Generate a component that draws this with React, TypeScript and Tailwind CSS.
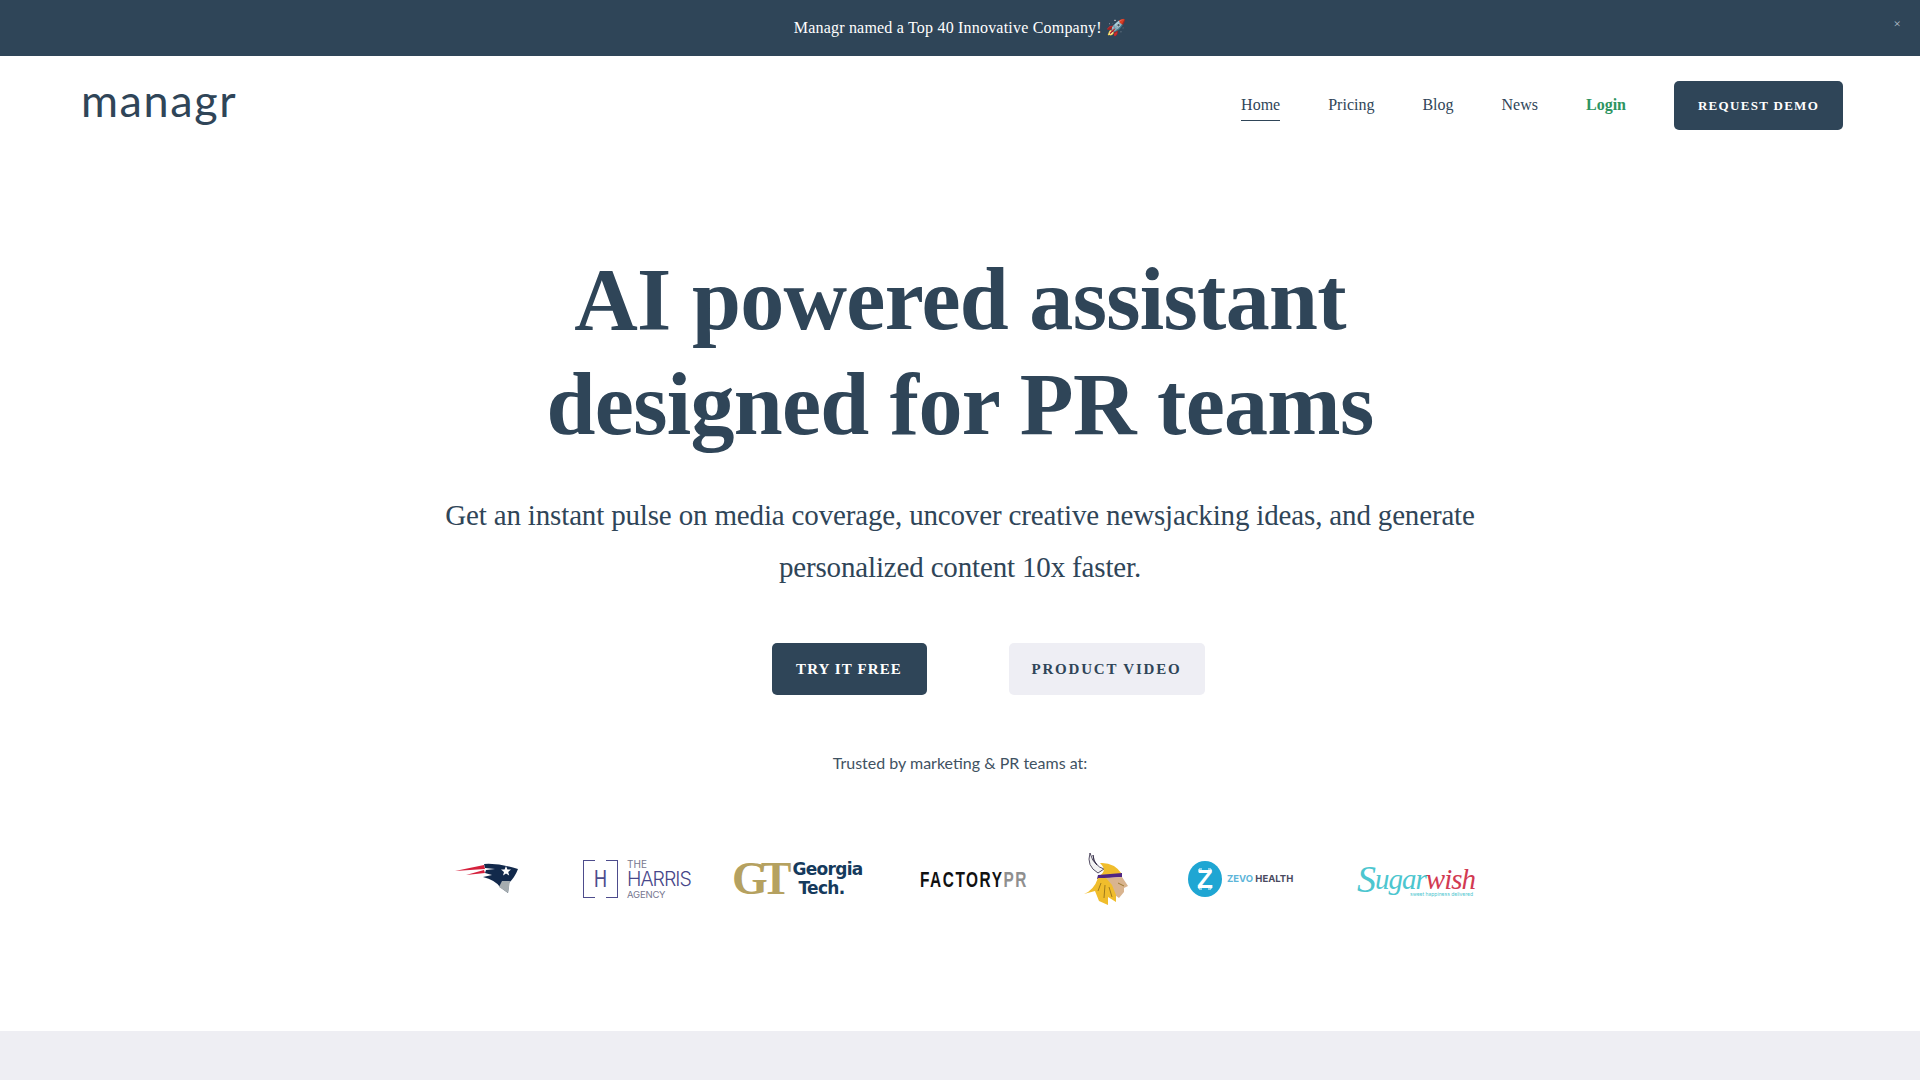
const serif = "font-['Liberation_Serif',serif]";

function PatriotsLogo() {
  return (
    <svg width="64" height="32" viewBox="0 0 64 32" className="shrink-0">
      <path d="M0 8 L29 2 L30 6 Z" fill="#d5203c" />
      <path d="M11 12 L29 7 L30 10 Z" fill="#d5203c" />
      <path d="M29 1 Q45 0 63 6 Q60 14 54 20 L53 30 L45 24 Q40 17 28 14 L37 12 L30 10 L31 7 L40 6 L30 5 Z" fill="#12294b" />
      <path d="M44 24 L47 18 L55 18 L53 30 Z" fill="#a5acaf" />
      <path d="M51 3 L52.4 6.6 L56 6.6 L53.2 9 L54.2 12.5 L51 10.4 L48 12.5 L49 9 L46 6.6 L49.6 6.6 Z" fill="#fff" />
    </svg>
  );
}

function VikingsLogo() {
  return (
    <svg width="44" height="52" viewBox="0 0 44 52" className="shrink-0">
      <path d="M6 0 Q2 13 14 20 L20 16 Q10 13 9 2 Q9 9 13 12 Q8 8 6 0 Z" fill="#f2f2f2" stroke="#2c2440" strokeWidth="0.8" />
      <path d="M16 10 Q30 9 38 21 L15 23 Q24 18 16 10 Z" fill="#f0bd2c" />
      <path d="M14 22 L38 20 L38 24 L13 26 Z" fill="#4f2683" />
      <path d="M20 25 L38 24 L44 33 L40 35 L40 39 L35 45 L28 40 Z" fill="#d9b48f" />
      <path d="M14 25 Q10 37 0 41 L11 38 L15 48 L24 52 L24 44 L32 49 L32 42 L28 32 L22 25 Z" fill="#f0bd2c" />
      <path d="M17 30 L14 38 M21 32 L20 45 M25 34 L28 44 M34 30 L40 33" stroke="#8a6a18" strokeWidth="0.8" fill="none" />
    </svg>
  );
}

function ZevoMark() {
  return (
    <div className="relative flex h-[36px] w-[34px] shrink-0 items-center justify-center rounded-[50%] bg-[#1fa6d3]">
      <span className="font-['Liberation_Sans',sans-serif] text-[26px] font-bold leading-none text-white">Z</span>
      <svg width="34" height="36" viewBox="0 0 34 36" className="absolute inset-0">
        <path d="M11 11 V8 H14 M23 11 V8 H20 M11 25 V28 H14 M23 25 V28 H20" stroke="#fff" strokeWidth="1" fill="none" />
      </svg>
    </div>
  );
}

function LogoRow() {
  return (
    <div className="mt-[79px] flex h-[52px] items-center">
      <div className="ml-[455px] w-[128px]">
        <PatriotsLogo />
      </div>
      <div className="flex w-[149px] items-center gap-[9px]">
        <div className="relative h-[38px] w-[35px] shrink-0 border-[1.5px] border-[#4d4c8c]">
          <span className="absolute inset-x-[11px] -inset-y-[2px] bg-white" />
          <span className="absolute inset-0 flex scale-x-75 items-center justify-center font-['Liberation_Sans',sans-serif] text-[24px] font-light leading-none text-[#4d4c8c]">
            H
          </span>
        </div>
        <div className="flex flex-col font-['Inter',sans-serif] text-[#47478a]">
          <span className="text-[10px] leading-[10px] text-[#77778f]">THE</span>
          <span className="text-[19.5px] font-light leading-[21px] tracking-[-1px]">HARRIS</span>
          <span className="text-[9.5px] leading-[10px] tracking-[-0.2px] text-[#77778f]">AGENCY</span>
        </div>
      </div>
      <div className="flex w-[188px] items-center">
        <span className="font-['Liberation_Serif',serif] text-[46px] font-bold leading-none tracking-[-7px] text-[#b5a160]">
          GT
        </span>
        <div className="ml-[8px] flex flex-col font-['DejaVu_Sans',sans-serif] text-[17px] font-bold leading-[19px] tracking-[-0.7px] text-[#153a5c]">
          <span>Georgia</span>
          <span className="ml-[6px]">Tech.</span>
        </div>
      </div>
      <div className="w-[164px] font-['Liberation_Sans',sans-serif] text-[22px] font-bold tracking-[2.2px] text-[#111]">
        <span className="inline-block origin-left scale-x-[0.7]">
          FACTORY<span className="text-[#8f8f8f]">PR</span>
        </span>
      </div>
      <div className="w-[104px]">
        <VikingsLogo />
      </div>
      <div className="flex w-[169px] items-center gap-[5px]">
        <ZevoMark />
        <span className="font-['Inter',sans-serif] text-[9.5px] font-bold text-[#4a4a5e]">
          <span className="text-[#5cb5d9]">ZEVO</span> HEALTH
        </span>
      </div>
      <div className="relative flex h-[40px] items-center font-['Liberation_Serif',serif] text-[29px] italic leading-none tracking-[-1px]">
        <span className="text-[38px] text-[#4cc6cf]">S</span>
        <span className="text-[#4cc6cf]">ugar</span>
        <span className="text-[#d23a52]">wish</span>
        <span className="absolute bottom-[2px] right-[2px] whitespace-nowrap font-['Inter',sans-serif] text-[5px] not-italic tracking-normal text-[#4cc6cf]">
          sweet happiness delivered
        </span>
      </div>
    </div>
  );
}

export default function App() {
  return (
    <div className={`flex h-[1080px] flex-col overflow-hidden bg-white ${serif} text-[#2f4558]`}>
      {/* announcement */}
      <div className="relative flex h-[56px] shrink-0 items-center justify-center bg-[#2f4558] text-[16px] tracking-[0.2px] text-white">
        <span>Managr named a Top 40 Innovative Company! 🚀</span>
        <span className="absolute right-[19px] top-[17px] text-[13px] leading-none text-[#b8c3cc]">×</span>
      </div>

      {/* nav */}
      <nav className="flex h-[99px] shrink-0 items-center justify-between pl-[81px] pr-[77px]">
        <span className="-mt-[10px] font-['Lato',sans-serif] text-[45px] leading-none tracking-[1.6px] text-[#2f4558]">managr</span>
        <div className="flex items-center text-[16px]">
          <a className="mr-[48px] border-b border-[#2f4558] pb-[3px] pt-[3px]">Home</a>
          <a className="-mt-[1px] mr-[48px]">Pricing</a>
          <a className="-mt-[1px] mr-[48px]">Blog</a>
          <a className="-mt-[1px] mr-[48px]">News</a>
          <a className="-mt-[1px] mr-[48px] font-bold text-[#2d9461]">Login</a>
          <button className="h-[49px] w-[169px] rounded-[5px] bg-[#2f4558] text-[13px] font-bold tracking-[1.3px] text-white">
            REQUEST DEMO
          </button>
        </div>
      </nav>

      {/* hero */}
      <section className="flex flex-1 flex-col items-center pt-[92px]">
        <h1 className="text-center text-[88px] font-bold leading-[105px] tracking-[-0.7px]">
          AI powered assistant
          <br />
          designed for PR teams
        </h1>
        <p className="mt-[32px] text-center text-[29px] leading-[52px] tracking-[-0.16px]">
          Get an instant pulse on media coverage, uncover creative newsjacking ideas, and generate
          <br />
          personalized content 10x faster.
        </p>
        <div className="ml-[56px] mt-[50px] flex gap-[82px]">
          <button className="h-[52px] w-[155px] rounded-[5px] bg-[#2f4558] text-[15px] font-bold tracking-[1.1px] text-white">
            TRY IT FREE
          </button>
          <button className="h-[52px] w-[196px] rounded-[5px] bg-[#eeeef4] text-[15px] font-bold tracking-[1.8px] text-[#2f4558]">
            PRODUCT VIDEO
          </button>
        </div>
        <p className="mt-[57px] font-['Lato',sans-serif] text-[16px] leading-[22px] text-[#3f5262]">Trusted by marketing &amp; PR teams at:</p>
        <div className="self-stretch">
          <LogoRow />
        </div>
      </section>

      <div className="h-[49px] shrink-0 bg-[#eeeef3]" />
    </div>
  );
}
